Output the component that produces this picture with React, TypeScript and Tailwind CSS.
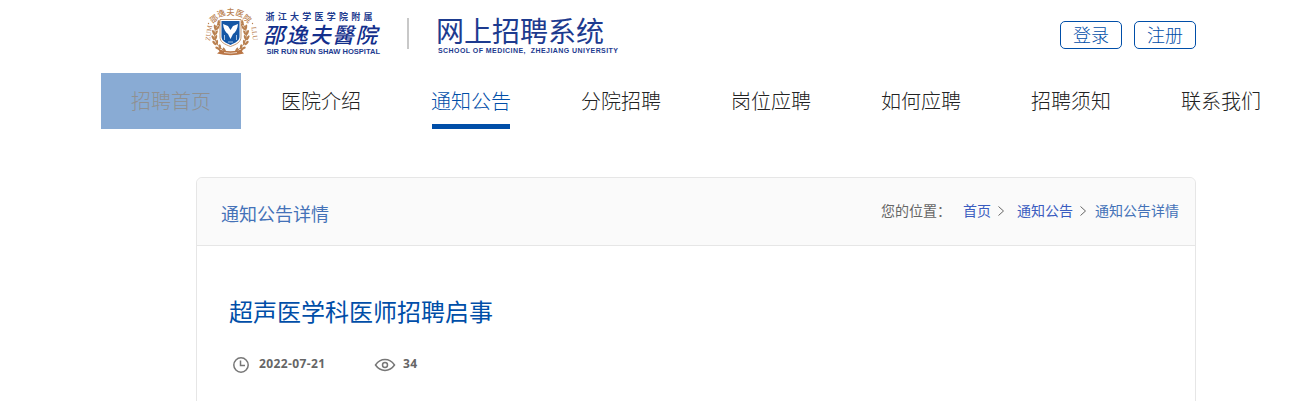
import type { ReactNode } from 'react'

const navItems = [
  { id: 'home', name: '招聘首页' },
  { id: 'intro', name: '医院介绍' },
  { id: 'notice', name: '通知公告' },
  { id: 'branch', name: '分院招聘' },
  { id: 'post', name: '岗位应聘' },
  { id: 'guide', name: '如何应聘' },
  { id: 'rules', name: '招聘须知' },
  { id: 'contact', name: '联系我们' },
]

// leaves of the wreath, as [x, y, angle] on the left side, mirrored for the right
const leaves = [
  [16, 17, 35],
  [12.5, 21, 15],
  [11, 26, 0],
  [10.5, 31, -8],
  [11.5, 36, -20],
  [14.5, 41, -35],
  [19, 44.5, -55],
]

function Emblem() {
  return (
    <svg width="54" height="56" viewBox="0 0 54 56" className="shrink-0">
      <g fill="#b98050" fontWeight="500" fontFamily='"Liberation Serif", "Noto Sans CJK SC", serif'>
        <text x="6" y="15.5" fontSize="8" transform="rotate(-38 10 13)">邵</text>
        <text x="13.5" y="10.5" fontSize="8" transform="rotate(-20 17 8)">逸</text>
        <text x="22.5" y="9" fontSize="8">夫</text>
        <text x="31.5" y="10.5" fontSize="8" transform="rotate(20 36 8)">医</text>
        <text x="39" y="15.5" fontSize="8" transform="rotate(38 43 13)">院</text>
        <text x="0" y="0" fontSize="7" transform="translate(6 35) rotate(-82)">ZUM</text>
        <text x="0" y="0" fontSize="7" transform="translate(47.5 21) rotate(84)">LLU</text>
        <circle cx="4.5" cy="17.5" r="0.7" />
        <circle cx="48.5" cy="17.5" r="0.7" />
      </g>
      {[false, true].map((flip) => (
        <g key={String(flip)} transform={flip ? 'translate(53 0) scale(-1 1)' : undefined}>
          <path d="M18 14C7 22 8 40 23 46" fill="none" stroke="#b98050" />
          {leaves.map(([x, y, angle]) => (
            <g key={y} transform={`translate(${x} ${y}) rotate(${angle})`} fill="#b98050">
              <ellipse cx="-1.5" cy="0" rx="1.2" ry="2.8" transform="rotate(-25)" />
              <ellipse cx="1.5" cy="0" rx="1.1" ry="2.5" transform="rotate(25)" />
            </g>
          ))}
        </g>
      ))}
      <path d="M16 13.500H37V31C37 36 33 38 26.500 40.500C20 38 16 36 16 31Z" fill="#fff" stroke="#b98050" strokeWidth="0.8" />
      <path d="M17.500 15H35.500V30.500C35.500 35 31.500 36.500 26.500 39C21.500 36.500 17.500 35 17.500 30.500Z" fill="#1557a5" />
      <path d="M19 18L24 20L26.500 24L29 20L34 18C33.500 23 31.500 26.500 29 28L26.500 33L24 28C21.500 26.500 19.500 23 19 18Z" fill="#fff" />
      <path d="M20.500 29V34M32.500 29V34M24 36H29" stroke="#c9dcf0" strokeWidth="0.8" />
      <path d="M14 43L19 44.500Q26.500 46 34 44.500L39 43L38 45.500L40 47.500Q26.500 51 13 47.500L15.500 45.500Z" fill="#b97545" />
      <path d="M20 46.500Q26.500 48 33 46.500" fill="none" stroke="#f6e6da" strokeWidth="0.8" />
    </svg>
  )
}

function Logo() {
  return (
    <div className="flex pl-[8px] pt-[6px]">
      <Emblem />
      <svg width="366" height="56" viewBox="258 6 366 56">
        <g fill="#1d3b8f" fontFamily='"Liberation Sans", "Noto Sans CJK SC", sans-serif'>
          <text x="265.500" y="20" fontSize="9" fontWeight="700" textLength="107">浙江大学医学院附属</text>
          <text x="263" y="42.500" fontSize="21.500" fontWeight="500" textLength="114" fontStyle="italic" fill="#132f8c">邵逸夫醫院</text>
          <text x="266.500" y="53.500" fontSize="8" fontWeight="700" textLength="113.500" lengthAdjust="spacingAndGlyphs">SIR RUN RUN SHAW HOSPITAL</text>
          <text x="436" y="42" fontSize="28" fontWeight="400" textLength="168">网上招聘系统</text>
          <text x="438" y="52.500" fontSize="7" fontWeight="700" textLength="180">SCHOOL OF MEDICINE,&#160; ZHEJIANG UNIYERSITY</text>
        </g>
        <path d="M408 18V49" stroke="#c8c8c8" strokeWidth="2" />
      </svg>
    </div>
  )
}

function AuthButton({ children }: { children: ReactNode }) {
  return (
    <button className="flex h-7 w-[62px] items-center justify-center rounded-[5px] border border-[#004ea8] pt-px text-lg leading-none text-[#004ea8]">
      {children}
    </button>
  )
}

function NavItem({ id, name }: { id: string; name: string }) {
  const state =
    id === 'home' ? 'bg-[#89abd4] text-[#909090]' : id === 'notice' ? 'text-[#004ea8]' : 'text-[#222]'
  return (
    <a className={`flex h-14 w-[140px] shrink-0 flex-col items-center text-xl ${state}`}>
      <span className="h-[51px] pt-[15px] leading-7">{name}</span>
      {id === 'notice' && <span className="h-[5px] w-[78px] bg-[#004ea8]" />}
    </a>
  )
}

function Chevron() {
  return (
    <svg width="8" height="12" viewBox="0 0 8 12" fill="none" stroke="#666">
      <path d="M1.500 1.500L6.500 6L1.500 10.500" />
    </svg>
  )
}

function Breadcrumb() {
  return (
    <div className="flex items-center pr-4 pb-px text-sm font-normal text-[#3a5cc0]">
      <span className="w-[82px] text-[#666]">您的位置：</span>
      <a className="w-[34px]">首页</a>
      <Chevron />
      <a className="ml-[12px] w-[62px]">通知公告</a>
      <Chevron />
      <a className="ml-[8px] text-[#4472b8]">通知公告详情</a>
    </div>
  )
}

export default function App() {
  return (
    <div className='h-[401px] w-[1302px] overflow-hidden bg-white font-["Liberation_Sans","Noto_Sans_CJK_SC",sans-serif] font-light'>
      <header className="ml-[196px] flex h-[73px] w-[1000px] justify-between">
        <Logo />
        <div className="flex gap-3 pt-[21px]">
          <AuthButton>登录</AuthButton>
          <AuthButton>注册</AuthButton>
        </div>
      </header>

      <nav className="ml-[101px] flex gap-[10px]">
        {navItems.map((item) => (
          <NavItem key={item.id} {...item} />
        ))}
      </nav>

      <main className="ml-[196px] mt-12 h-[300px] w-[1000px] rounded-md border border-[#e6e6e6]">
        <div className="flex h-[68px] items-center justify-between rounded-t-md border-b border-[#e6e6e6] bg-[#fafafa]">
          <h2 className="pl-6 pt-1.5 text-lg font-normal text-[#4472b8]">通知公告详情</h2>
          <Breadcrumb />
        </div>
        <div className="px-8 pt-[49px]">
          <h1 className="text-2xl leading-9 font-normal text-[#004ea8]">超声医学科医师招聘启事</h1>
          <div className='mt-[25px] flex items-center pl-1 font-["Open_Sans",sans-serif] text-xs font-bold text-[#666]'>
            <svg width="16" height="16" viewBox="0 0 16 16" fill="none" stroke="#777" strokeWidth="1.500">
              <circle cx="8" cy="8" r="7.200" />
              <path d="M7.500 3.500V8.500H12" />
            </svg>
            <span className="ml-[10px] w-[115px] pb-0.5 tracking-[0.4px]">2022-07-21</span>
            <svg width="22" height="14" viewBox="0 0 22 14" fill="none" stroke="#777" strokeWidth="1.500">
              <path d="M1.500 7C6.500-0.200 15.500-0.200 20.500 7C15.500 14.200 6.500 14.200 1.500 7Z" />
              <circle cx="11" cy="7" r="2.500" />
            </svg>
            <span className="ml-[7px] pb-0.5 tracking-[0.4px]">34</span>
          </div>
        </div>
      </main>
    </div>
  )
}
